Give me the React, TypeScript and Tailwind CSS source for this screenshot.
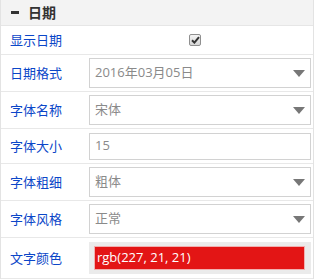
import { useState } from "react";

type Row =
  | { label: string; kind: "check" }
  | { label: string; kind: "select"; value: string }
  | { label: string; kind: "input"; value: string }
  | { label: string; kind: "color"; value: string };

const ROWS: Row[] = [
  { label: "显示日期", kind: "check" },
  { label: "日期格式", kind: "select", value: "2016年03月05日" },
  { label: "字体名称", kind: "select", value: "宋体" },
  { label: "字体大小", kind: "input", value: "15" },
  { label: "字体粗细", kind: "select", value: "粗体" },
  { label: "字体风格", kind: "select", value: "正常" },
  { label: "文字颜色", kind: "color", value: "rgb(227, 21, 21)" },
];

function Caret() {
  return (
    <svg width="12" height="7" viewBox="0 0 12 7" className="shrink-0">
      <path d="M0 0 H12 L6 7 Z" fill="#777" />
    </svg>
  );
}

function Check({ on, onToggle }: { on: boolean; onToggle: () => void }) {
  return (
    <button
      onClick={onToggle}
      className="flex h-[12px] w-[12px] items-center justify-center rounded-[2px] border border-[#8f8f8f] bg-gradient-to-b from-[#f4f4f4] to-[#d6d6d6]"
    >
      {on && (
        <svg width="9" height="8" viewBox="0 0 9 8">
          <path d="M1 4.2 L3.4 6.6 L8 1.2" stroke="#333" strokeWidth="2" fill="none" />
        </svg>
      )}
    </button>
  );
}

export default function App() {
  const [showDate, setShowDate] = useState(true);

  return (
    <div
      className="w-[314px] border-x border-b border-[#e3e3e3] bg-white text-[13px]"
      style={{ fontFamily: '"Open Sans", "Noto Sans CJK SC", sans-serif' }}
    >
      {/* section header */}
      <div className="flex h-[26px] items-center gap-[9px] border-b border-[#e6e6e6] bg-[#f3f3f3] pl-[10px]">
        <span className="block h-[3px] w-[8px] bg-[#333]" />
        <span className="text-[14px] font-bold leading-none text-[#333]">日期</span>
      </div>

      {ROWS.map((row) => (
        <div
          key={row.label}
          className={`flex items-center border-b border-[#e8e8e8] ${
            row.kind === "check" ? "h-[29px]" : row.kind === "input" ? "h-[35px]" : row.kind === "color" ? "h-[41px]" : "h-[37px]"
          }`}
        >
          <div className="w-[88px] shrink-0 pl-[9px] leading-none text-[#0b46c8]">{row.label}</div>

          <div className="flex flex-1 items-center pr-[2px]">
            {row.kind === "check" && (
              <div className="flex flex-1 justify-center pr-[10px]">
                <Check on={showDate} onToggle={() => setShowDate((s) => !s)} />
              </div>
            )}

            {row.kind === "select" && (
              <div className="flex h-[30px] flex-1 items-center justify-between border border-[#d2d2d2] pl-[5px] pr-[5px]">
                <span className="text-[#8a8a8a]">{row.value}</span>
                <Caret />
              </div>
            )}

            {row.kind === "input" && (
              <div className="flex h-[27px] flex-1 items-center border border-[#d2d2d2] pl-[5px]">
                <span className="text-[#8a8a8a]">{row.value}</span>
              </div>
            )}

            {row.kind === "color" && (
              <div className="flex h-[32px] flex-1 items-center bg-[#ebebeb] pl-[5px] pr-[6px]">
                <div className="flex h-[24px] flex-1 items-center border border-[#f1b0b0] bg-[#e31515] pl-[2px]">
                  <span className="text-white">{row.value}</span>
                </div>
              </div>
            )}
          </div>
        </div>
      ))}
    </div>
  );
}
